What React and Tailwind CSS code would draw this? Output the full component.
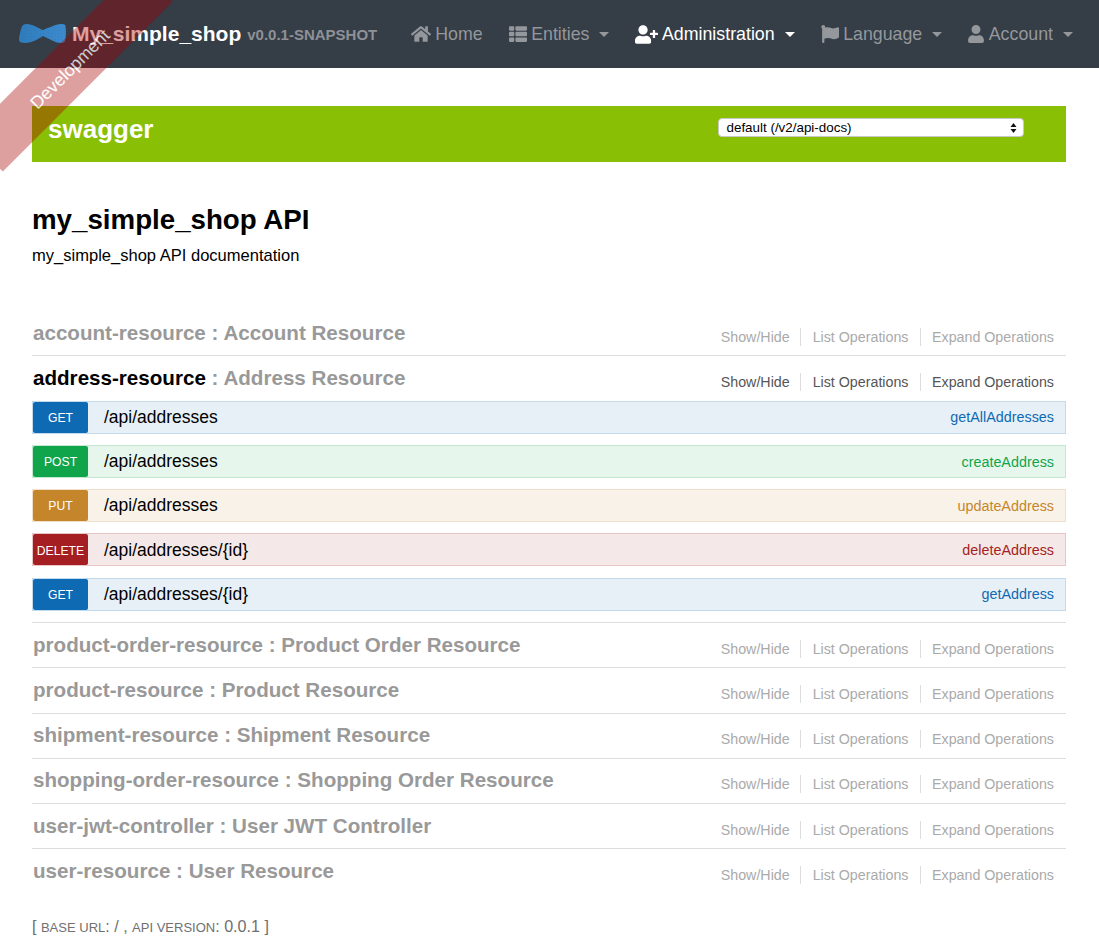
import { FaHome, FaThList, FaUserPlus, FaFlag, FaUser } from "react-icons/fa";

const resourcesAfter = [
  ["product-order-resource", "Product Order Resource"],
  ["product-resource", "Product Resource"],
  ["shipment-resource", "Shipment Resource"],
  ["shopping-order-resource", "Shopping Order Resource"],
  ["user-jwt-controller", "User JWT Controller"],
  ["user-resource", "User Resource"],
];

const operations = [
  { method: "GET", path: "/api/addresses", name: "getAllAddresses", row: "bg-[#e7f0f7] border-[#c3d9ec]", badge: "bg-[#0f6ab4]", text: "text-[#0f6ab4]" },
  { method: "POST", path: "/api/addresses", name: "createAddress", row: "bg-[#e7f6ec] border-[#c3e8d1]", badge: "bg-[#10a54a]", text: "text-[#10a54a]" },
  { method: "PUT", path: "/api/addresses", name: "updateAddress", row: "bg-[#f9f2e9] border-[#f0e0ca]", badge: "bg-[#c5862b]", text: "text-[#c5862b]" },
  { method: "DELETE", path: "/api/addresses/{id}", name: "deleteAddress", row: "bg-[#f5e8e8] border-[#e8c6c7]", badge: "bg-[#a41e22]", text: "text-[#a41e22]" },
  { method: "GET", path: "/api/addresses/{id}", name: "getAddress", row: "bg-[#e7f0f7] border-[#c3d9ec]", badge: "bg-[#0f6ab4]", text: "text-[#0f6ab4]" },
];

const bowtie =
  "M25 7 C20 5 14 1 9 1 C6 1 4 2 3 6 C2 10 1 14 1 17 C1 19 3 20 7 20 C14 20 20 16 25 13 C30 15 37 20 43 20 C46 20 47 19 47.5 16 C48 12 48 7 47.5 3 C47 1 45 1 42 1 C36 2 30 5 25 7 Z";

function Logo() {
  return (
    <svg width="50" height="22" viewBox="0 0 50 22">
      <defs>
        <pattern id="dots" width="3" height="3" patternUnits="userSpaceOnUse">
          <circle cx="1.2" cy="1.2" r="0.45" fill="#1d5f96" opacity="0.55" />
        </pattern>
        <linearGradient id="wing" x1="0" x2="1" y1="0" y2="0">
          <stop offset="0" stopColor="#2f7cbb" />
          <stop offset="1" stopColor="#3d8bcf" />
        </linearGradient>
      </defs>
      <path d={bowtie} fill="url(#wing)" />
      <path d={bowtie} fill="url(#dots)" />
    </svg>
  );
}

function NavItem({ icon, label, caret, active, className }) {
  return (
    <div className={`flex items-center text-[17.8px] ${active ? "text-white" : "text-[#94979b]"} ${className || ""}`}>
      {icon}
      <span className="ml-[4px]">{label}</span>
      {caret && (
        <span className="ml-[10px] w-0 h-0 border-x-[5.5px] border-x-transparent border-t-[5.5px] border-t-current"></span>
      )}
    </div>
  );
}

function Actions({ dark }) {
  const color = dark ? "text-[#555555]" : "text-[#aaaaaa]";
  return (
    <div className={`flex items-center mt-[8px] text-[14.25px] ${color}`}>
      <span className="pr-[10.5px] border-r border-[#dddddd] leading-[18px]">Show/Hide</span>
      <span className="pl-[11.5px] pr-[11px] border-r border-[#dddddd] leading-[18px]">List Operations</span>
      <span className="pl-[11.5px] pr-[12px] leading-[18px]">Expand Operations</span>
    </div>
  );
}

function Resource({ name, title, open, last }) {
  return (
    <div className={`flex items-center justify-between pb-[1px] ${open ? "h-[44.4px]" : "h-[45.2px]"} ${open || last ? "" : "border-b border-[#dddddd]"}`}>
      <h2 className="text-[20.6px] font-bold text-[#999999] pl-[1px] mt-[1px]">
        <span className={open ? "text-black" : ""}>{name}</span> : {title}
      </h2>
      <Actions dark={open} />
    </div>
  );
}

function Operation({ op }) {
  return (
    <div className={`h-[33px] mb-[11.25px] flex items-center border ${op.row}`}>
      <span className={`w-[55px] h-[31px] pt-[2px] flex items-center justify-center rounded-[2px] text-[12.2px] text-white ${op.badge}`}>
        {op.method}
      </span>
      <span className="ml-[16px] text-[17.5px] text-black flex-1">{op.path}</span>
      <span className={`mr-[11px] mt-[2px] text-[14.35px] ${op.text}`}>{op.name}</span>
    </div>
  );
}

export default function App() {
  return (
    <div className="relative w-[1099px] h-[940px] overflow-hidden bg-white font-['Liberation_Sans',Arial,sans-serif]">
      <nav className="h-[68px] bg-[#353d47] flex items-center pl-[18px] pr-[26px]">
        <Logo />
        <span className="text-white font-bold text-[21px] ml-[4px]">My_simple_shop</span>
        <span className="ml-[6px] text-[#8e9196] font-bold text-[15px] mt-[2px]">v0.0.1-SNAPSHOT</span>
        <div className="ml-auto flex items-center gap-[26.5px]">
          <NavItem icon={<FaHome size={20} />} label="Home" />
          <NavItem icon={<FaThList size={18} />} label="Entities" caret />
          <NavItem icon={<FaUserPlus size={23} />} label="Administration" caret active className="-ml-[1px]" />
          <NavItem icon={<FaFlag size={18} />} label="Language" caret />
          <NavItem icon={<FaUser size={18} className="-ml-[2px]" />} label="Account" caret />
        </div>
      </nav>

      <main className="px-[32px] pt-[38px] w-[1098px]">
        <header className="h-[56px] bg-[#89bf04] flex items-start pl-[16px]">
          <span className="text-white font-bold text-[26px] leading-[30px] mt-[8px]">swagger</span>
          <div className="ml-[564px] mt-[12px] w-[306px] h-[19px] bg-white rounded-[4px] border border-[#c9c9c9] flex items-center justify-between pl-[8px] pr-[6px] leading-none text-black">
            <span className="text-[13.4px]">default (/v2/api-docs)</span>
            <svg width="7" height="12" viewBox="0 0 7 12">
              <path d="M3.5 1 L6.5 5 L0.5 5 Z M3.5 11 L0.5 7 L6.5 7 Z" fill="#111111" />
            </svg>
          </div>
        </header>

        <h1 className="mt-[43px] text-[27.7px] leading-[30px] font-bold text-black">my_simple_shop API</h1>
        <p className="mt-[11px] text-[16.55px] leading-[20px] text-black">my_simple_shop API documentation</p>

        <section className="mt-[45px]">
          <Resource name="account-resource" title="Account Resource" />
          <Resource name="address-resource" title="Address Resource" open />
          {operations.map((op, i) => (
            <Operation key={i} op={op} />
          ))}
          <div className="border-b border-[#dddddd] mb-[0.4px]"></div>
          {resourcesAfter.map((r, i) => (
            <Resource key={r[0]} name={r[0]} title={r[1]} last={i === resourcesAfter.length - 1} />
          ))}
        </section>

        <p className="mt-[19.6px] text-[16.1px] text-[#707070]">
          [ <span className="text-[13px] uppercase">base url</span>: / , <span className="text-[13px] uppercase">api version</span>: 0.0.1 ]
        </p>
      </main>

      <div className="absolute top-[44px] left-[-50px] w-[240px] -rotate-45 bg-[rgba(170,0,0,0.5)] opacity-75 pointer-events-none">
        <div className="my-[1px] py-[10px] px-[50px] text-center text-white text-[17.6px] leading-[28px]">Development</div>
      </div>
    </div>
  );
}
